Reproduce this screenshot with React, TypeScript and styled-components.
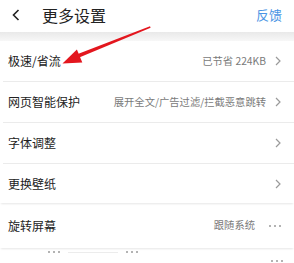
import React from "react";
import styled, { createGlobalStyle } from "styled-components";

const Global = createGlobalStyle`
  html, body { margin: 0; padding: 0; background: #fff; }
  body { font-family: "Noto Sans CJK SC", "Noto Sans", sans-serif; }
`;

const Page = styled.div`
  position: relative;
  width: 294px;
  height: 263px;
  overflow: hidden;
  background: #fff;
`;

const Header = styled.div`
  height: 32px;
  display: flex;
  align-items: center;
  padding: 0 12px 2px 12px;
  box-sizing: border-box;
`;

const Title = styled.div`
  font-size: 16px;
  color: #222;
  margin-left: 22px;
  flex: 1;
  line-height: 1;
`;

const Feedback = styled.div`
  font-size: 13px;
  color: #4b94e4;
  line-height: 1;
  margin-bottom: 2px;
`;

const Band = styled.div`
  height: 9px;
  background: linear-gradient(#e9e9e9, #f7f7f7);
`;

const Row = styled.div<{ $h: number; $shadow?: boolean }>`
  height: ${(p) => p.$h}px;
  display: flex;
  align-items: center;
  padding: 0 13px 0 8px;
  box-sizing: border-box;
  border-bottom: ${(p) => (p.$shadow ? "none" : "1px solid #ebebeb")};
  box-shadow: ${(p) => (p.$shadow ? "0 2px 2px -1px #e6e6e6" : "none")};
  margin-left: ${(p) => (p.$shadow ? 0 : 3)}px;
  padding-left: ${(p) => (p.$shadow ? 8 : 5)}px;
`;

const Label = styled.div`
  font-size: 12px;
  color: #222;
  flex: 1;
  line-height: 1;
`;

const Value = styled.div<{ $gap?: number }>`
  font-size: 10.3px;
  color: #7a7a7a;
  line-height: 1;
  margin-right: ${(p) => p.$gap ?? 9}px;
`;

const Dots = styled.div`
  display: flex;
  gap: 3px;
  align-items: center;
`;

const Dot = styled.span`
  width: 2px;
  height: 2px;
  border-radius: 50%;
  background: #9a9a9a;
`;

const Footer = styled.div`
  display: flex;
  align-items: flex-start;
  padding: 3px 11px 0 48px;
  height: 17px;
  box-sizing: border-box;
`;

const FadeLine = styled.div<{ $w: number }>`
  width: ${(p) => p.$w}px;
  height: 1px;
  background: #ececec;
  margin: 1px 8px 0;
`;

const Spacer = styled.div`
  flex: 1;
`;

const RightDots = styled.div`
  margin-top: 9px;
`;

const Overlay = styled.svg`
  position: absolute;
  left: 0;
  top: 0;
  pointer-events: none;
`;

const Chevron = () => (
  <svg width="6" height="10" viewBox="0 0 6 10">
    <path d="M1 1 L5 5 L1 9" fill="none" stroke="#9a9a9a" strokeWidth="1.2" />
  </svg>
);

const Back = () => (
  <svg width="8" height="12" viewBox="0 0 8 12">
    <path d="M6.5 1 L1.5 6 L6.5 11" fill="none" stroke="#222" strokeWidth="1.6" />
  </svg>
);

const ThreeDots = () => (
  <Dots>
    <Dot />
    <Dot />
    <Dot />
  </Dots>
);

export default function App() {
  return (
    <Page>
      <Global />
      <Header>
        <Back />
        <Title>更多设置</Title>
        <Feedback>反馈</Feedback>
      </Header>
      <Band />
      <Row $h={41}>
        <Label>极速/省流</Label>
        <Value>已节省 224KB</Value>
        <Chevron />
      </Row>
      <Row $h={41}>
        <Label>网页智能保护</Label>
        <Value>展开全文/广告过滤/拦截恶意跳转</Value>
        <Chevron />
      </Row>
      <Row $h={41}>
        <Label>字体调整</Label>
        <Chevron />
      </Row>
      <Row $h={39} $shadow>
        <Label>更换壁纸</Label>
        <Chevron />
      </Row>
      <Row $h={45} $shadow>
        <Label>旋转屏幕</Label>
        <Value $gap={14}>跟随系统</Value>
        <ThreeDots />
      </Row>
      <Footer>
        <ThreeDots />
        <FadeLine $w={50} />
        <ThreeDots />
        <Spacer />
        <RightDots>
          <ThreeDots />
        </RightDots>
      </Footer>
      <Overlay width="294" height="263" viewBox="0 0 294 263">
        <polygon points="150,26.2 150.6,27.8 78,58 76.5,54.5" fill="#e3161e" />
        <polygon points="62.5,63.5 76.9,49.6 82.3,62.6" fill="#e3161e" />
      </Overlay>
    </Page>
  );
}
